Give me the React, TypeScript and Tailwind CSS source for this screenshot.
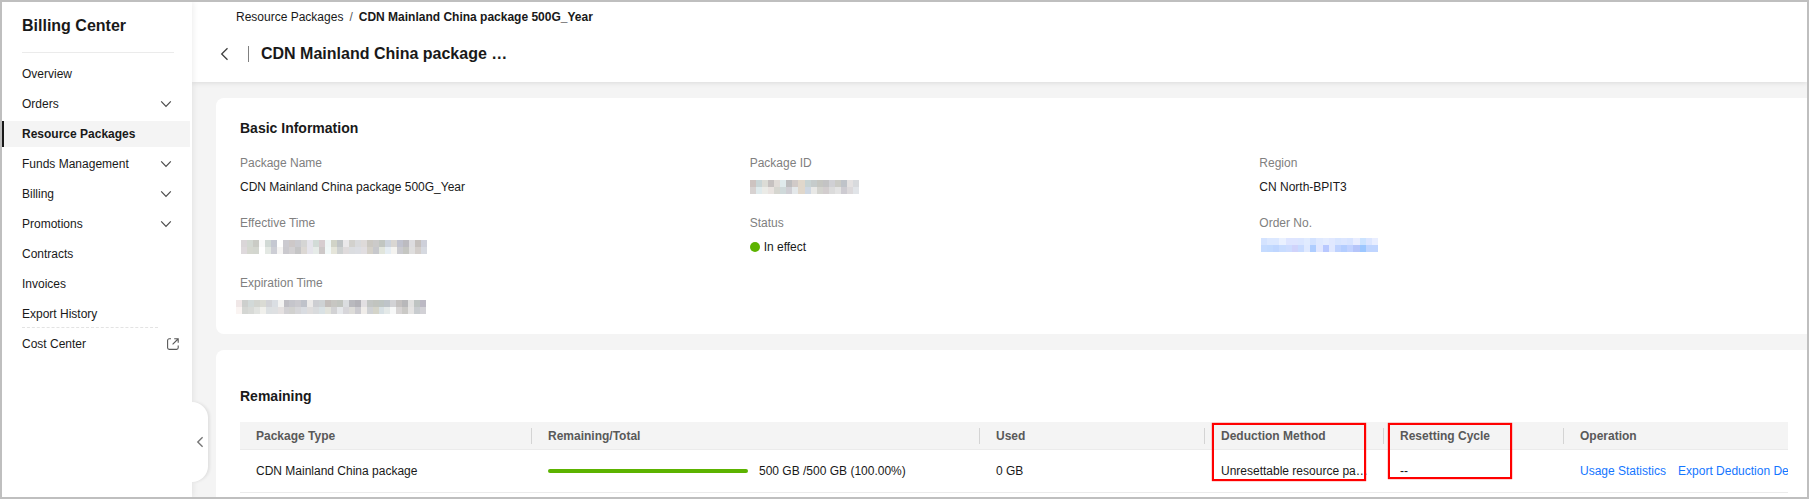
import type { ReactNode } from "react";

const navItems = [
  { label: "Overview" },
  { label: "Orders", expandable: true },
  { label: "Resource Packages", active: true },
  { label: "Funds Management", expandable: true },
  { label: "Billing", expandable: true },
  { label: "Promotions", expandable: true },
  { label: "Contracts" },
  { label: "Invoices" },
  { label: "Export History" },
];

// Each hidden value is two rows of colour blocks
const masks = {
  packageId: [
    ["#cdc3c0", "#c9d5d6", "#dcdcd6", "#c6c1c0", "#e0dbd7", "#dfeaec", "#bdbdbf", "#d1cac8", "#e0d7cb", "#c8d3d3", "#c5cbcb", "#c5c6c1", "#c3c3c4", "#d0d0d4", "#cbcbc6", "#bfc3c9", "#e4e1e1", "#d8dadd"],
    ["#d7d2d1", "#dfeaec", "#ebebe7", "#e9e3e0", "#d6d6d0", "#cfd9da", "#cfced4", "#e4e8ea", "#e0d7cb", "#ced7e2", "#e8e8e6", "#d3d3ce", "#d2cdce", "#dbdbdb", "#e3e3e3", "#cdcbd1", "#dcd9db", "#e1e4e8"],
  ],
  effectiveTime: [
    ["#dad6d8", "#d3d8d2", "#cacbc5", "#fafafa", "#d1d9d5", "#c5c8d2", "#fefefe", "#cbcad0", "#cdc8c8", "#cbcbd0", "#d5d5d4", "#e5e4eb", "#d2dbd7", "#d7cdd0", "#eff6f6", "#d1d3c7", "#c0c4c6", "#eae8ea", "#d2d1cd", "#d9dadc", "#dedad9", "#cbc8c2", "#cbcac9", "#c1c6c1", "#ccd3dc", "#d9d6d2", "#c0c2ce", "#bcbbc0", "#dddcdf", "#c5c0bd", "#ced0da"],
    ["#ded9dc", "#d5d7cf", "#d3d6cf", "#ffffff", "#e3e8e3", "#cdced5", "#f5f4f3", "#cac9ce", "#d2d0d2", "#c5c5c6", "#dcd8d4", "#e5e4eb", "#e6ebe8", "#cdc8c8", "#f1f8f8", "#e5e5da", "#ced1d1", "#dfdbdc", "#dbdde0", "#dcdee3", "#e1dee1", "#d4d0c8", "#c7c8cc", "#e1e5dc", "#e5edf3", "#f4f3f0", "#cacacf", "#c5c6c2", "#dfdede", "#d3cecb", "#d6d9e0"],
  ],
  expirationTime: [
    ["#f0e7e7", "#cdcfcd", "#d2d9d8", "#d3d5d0", "#dadbd4", "#d2d3d7", "#dadee3", "#f3f3f2", "#bfbec4", "#c5c5cb", "#cac9ce", "#bfc2ca", "#eceae9", "#cdced2", "#ced2d4", "#c3bebb", "#c7c6c2", "#c2c5c0", "#dbdde0", "#b9b9be", "#b3b2b8", "#e2dfe2", "#c3c6c4", "#c1c4bf", "#bec5c2", "#bec4c9", "#d2d2d5", "#c4c1c0", "#b8b8ba", "#e1e1e0", "#bec4c2", "#bcb9c4"],
    ["#faf4f2", "#d4d6d3", "#d8dad7", "#e1e3e0", "#f0f0ec", "#dce0e2", "#dee0e2", "#e5e1e1", "#d2d1d4", "#d1d1cf", "#d6d6d9", "#d9dce1", "#dfdddd", "#d9dbdd", "#d9e1e4", "#e2e3dc", "#d2d2d4", "#e6e8eb", "#d7d6da", "#dddcd9", "#cccbd0", "#f0edea", "#cfd1d4", "#d4d4c9", "#d7e0e4", "#e4e9e8", "#f7f8f8", "#d7d4d4", "#cac9c6", "#e5e4e3", "#c8cccf", "#d2d1d6"],
  ],
  orderNo: [
    ["#d4e3ff", "#dce8ff", "#dce8ff", "#eaf1ff", "#dee5ff", "#dee5ff", "#dbe6ff", "#e0ebff", "#d3e2ff", "#dfe9ff", "#e4ecff", "#e0e8ff", "#d8e5ff", "#dce6ff", "#d8e4ff", "#e8edff", "#cce3ff", "#dce6ff", "#e9eeff"],
    ["#c5dbff", "#c2daff", "#bfd6ff", "#c8dcff", "#cddcff", "#d0d3fb", "#c8dbff", "#dfe9ff", "#aecdff", "#e1e7ff", "#b8c8ff", "#e0e8ff", "#bed2ff", "#b3cdff", "#c1d2ff", "#b5c5fa", "#9cc7ff", "#bfd5ff", "#c0d5ff"],
  ],
};

function Mask({ rows, className }: { rows: string[][]; className: string }) {
  return (
    <svg
      className={className}
      viewBox={`0 0 ${rows[0].length} 2`}
      preserveAspectRatio="none"
      shapeRendering="crispEdges"
      aria-hidden="true"
    >
      {rows.map((row, y) =>
        row.map((fill, x) => <rect key={`${x}-${y}`} x={x} y={y} width="1" height="1" fill={fill} />)
      )}
    </svg>
  );
}

function ChevronDown() {
  return (
    <svg className="h-3 w-3" viewBox="0 0 12 12" fill="none" stroke="#4a4a4a" strokeWidth="1.2" aria-hidden="true">
      <path d="M1.2 3.4 6 8.3l4.8-4.9" />
    </svg>
  );
}

function ExternalIcon() {
  return (
    <svg className="h-[14px] w-[14px]" viewBox="0 0 14 14" fill="none" stroke="#595959" strokeWidth="1.1" aria-hidden="true">
      <path d="M5 1.8H3.2A1.6 1.6 0 0 0 1.6 3.4v7.4a1.6 1.6 0 0 0 1.6 1.6h7.4a1.6 1.6 0 0 0 1.6-1.6V8.6" />
      <path d="M8.2 1.8h4v4M12 2 6.6 7.4" />
    </svg>
  );
}

function Sidebar() {
  return (
    <aside className="relative z-10 w-[190px] shrink-0 bg-white pt-3 shadow-[1px_0_6px_rgba(0,0,0,0.08)]">
      <h2 className="ml-5 mr-[18px] border-b border-[#ebebeb] pb-[14px] text-base leading-6 font-bold">
        Billing Center
      </h2>
      <nav className="mt-2 mr-[2px]">
        <ul className="flex flex-col gap-1">
          {navItems.map((item) => (
            <li key={item.label}>
              <a
                href="#"
                className={`flex h-[26px] items-center justify-between border-l-2 pl-[18px] pr-[18px] ${
                  item.active ? "border-[#191919] bg-[#f4f4f4] font-bold" : "border-transparent"
                }`}
              >
                {item.label}
                {item.expandable && <ChevronDown />}
              </a>
            </li>
          ))}
        </ul>
        <hr className="ml-5 mr-8 border-dashed border-[#e3e3e3]" />
        <a href="#" className="mt-[3px] flex h-[26px] items-center justify-between pl-5 pr-[10px]">
          Cost Center
          <ExternalIcon />
        </a>
      </nav>
      <button
        type="button"
        aria-label="Collapse menu"
        className="absolute top-[400px] left-full flex h-20 w-4 items-center justify-center rounded-r-2xl bg-white shadow-[2px_0_3px_rgba(0,0,0,0.08)]"
      >
        <svg className="h-3 w-3" viewBox="0 0 12 12" fill="none" stroke="#777777" strokeWidth="1.4" aria-hidden="true">
          <path d="M8.6 1.2 3.8 6l4.8 4.8" />
        </svg>
      </button>
    </aside>
  );
}

function Field({ label, children }: { label: string; children: ReactNode }) {
  return (
    <div className="flex flex-col gap-[6px]">
      <dt className="text-[#808080]">{label}</dt>
      <dd className="flex h-[18px] items-center">{children}</dd>
    </div>
  );
}

function HeadCell({ children, last, boxed }: { children: ReactNode; last?: boolean; boxed?: ReactNode }) {
  return (
    <th scope="col" className="relative p-0 text-left font-bold text-[#595959]">
      <div className="flex h-[27px] items-center justify-between pl-4">
        {children}
        {!last && <span className="h-4 w-px bg-[#d4d4d4]" />}
      </div>
      {boxed}
    </th>
  );
}

export default function App() {
  return (
    <div className="flex min-h-screen overflow-hidden border-2 border-[#bfbfbf] bg-[#f4f4f4] font-['Liberation_Sans',Arial,sans-serif] text-xs leading-[18px] text-[#191919]">
      <Sidebar />
      <div className="flex min-w-0 flex-1 flex-col">
        <header className="bg-white pt-[6px] pb-4 shadow-[0_1px_5px_rgba(0,0,0,0.1)]">
          <nav className="flex gap-[6px] pl-11" aria-label="Breadcrumb">
            <a href="#">Resource Packages</a>
            <span className="text-[#595959]">/</span>
            <span className="font-bold">CDN Mainland China package 500G_Year</span>
          </nav>
          <div className="mt-4 flex h-6 items-center pl-6">
            <button type="button" aria-label="Back">
              <svg className="h-4 w-4" viewBox="0 0 16 16" fill="none" stroke="#404040" strokeWidth="1.3" aria-hidden="true">
                <path d="M11.5 2.2 5.7 8l5.8 5.8" />
              </svg>
            </button>
            <span className="ml-4 mr-3 h-4 w-px bg-[#808080]" />
            <h1 className="w-[250px] truncate text-base leading-6 font-bold">CDN Mainland China package 500G_Year</h1>
          </div>
        </header>

        <main className="flex flex-1 flex-col gap-4 pt-4 pl-6">
          <section className="rounded-l-lg bg-white pt-5 pb-[18px] pl-6">
            <h2 className="text-sm leading-5 font-bold">Basic Information</h2>
            <dl className="mt-4 mr-[38px] grid grid-cols-3 gap-y-[18px]">
              <Field label="Package Name">CDN Mainland China package 500G_Year</Field>
              <Field label="Package ID">
                <Mask rows={masks.packageId} className="h-[14px] w-[109px]" />
              </Field>
              <Field label="Region">CN North-BPIT3</Field>
              <Field label="Effective Time">
                <Mask rows={masks.effectiveTime} className="ml-px h-[14px] w-[186px]" />
              </Field>
              <Field label="Status">
                <span className="mr-1 h-[10px] w-[10px] rounded-full bg-[#5cb300]" />
                In effect
              </Field>
              <Field label="Order No.">
                <Mask rows={masks.orderNo} className="ml-[2px] h-[14px] w-[117px] self-start" />
              </Field>
              <Field label="Expiration Time">
                <Mask rows={masks.expirationTime} className="-ml-1 h-[14px] w-[190px]" />
              </Field>
            </dl>
          </section>

          <section className="flex-1 rounded-tl-lg bg-white pt-9 pr-[19px] pl-6">
            <h2 className="text-sm leading-5 font-bold">Remaining</h2>
            <table className="mt-4 w-full table-fixed border-collapse">
              <colgroup>
                <col className="w-[292px]" />
                <col className="w-[448px]" />
                <col className="w-[225px]" />
                <col className="w-[179px]" />
                <col className="w-[180px]" />
                <col />
              </colgroup>
              <thead>
                <tr className="border-b border-[#ebebeb] bg-[#f4f4f4]">
                  <HeadCell>Package Type</HeadCell>
                  <HeadCell>Remaining/Total</HeadCell>
                  <HeadCell>Used</HeadCell>
                  <HeadCell
                    boxed={
                      <span className="absolute top-px left-[7px] h-[58px] w-[154px] border-2 border-[#ff0000] shadow-[0_0_1px_#ff0000]" />
                    }
                  >
                    Deduction Method
                  </HeadCell>
                  <HeadCell
                    boxed={
                      <span className="absolute top-px left-1 h-14 w-[124px] border-2 border-[#ff0000] shadow-[0_0_1px_#ff0000]" />
                    }
                  >
                    Resetting Cycle
                  </HeadCell>
                  <HeadCell last>Operation</HeadCell>
                </tr>
              </thead>
              <tbody>
                <tr className="h-[43px] border-b border-[#ebebeb]">
                  <td className="px-4">CDN Mainland China package</td>
                  <td className="px-4">
                    <div className="flex items-center gap-[11px]">
                      <div className="h-1 w-[200px] rounded-full bg-[#5cb300]" />
                      500 GB /500 GB (100.00%)
                    </div>
                  </td>
                  <td className="px-4">0 GB</td>
                  <td className="truncate px-4">Unresettable resource package</td>
                  <td className="px-4">--</td>
                  <td className="p-0 pl-4">
                    <div className="flex gap-3 overflow-hidden whitespace-nowrap text-[#1476ff]">
                      <a href="#">Usage Statistics</a>
                      <a href="#">Export Deduction Details</a>
                    </div>
                  </td>
                </tr>
              </tbody>
            </table>
          </section>
        </main>
      </div>
    </div>
  );
}
